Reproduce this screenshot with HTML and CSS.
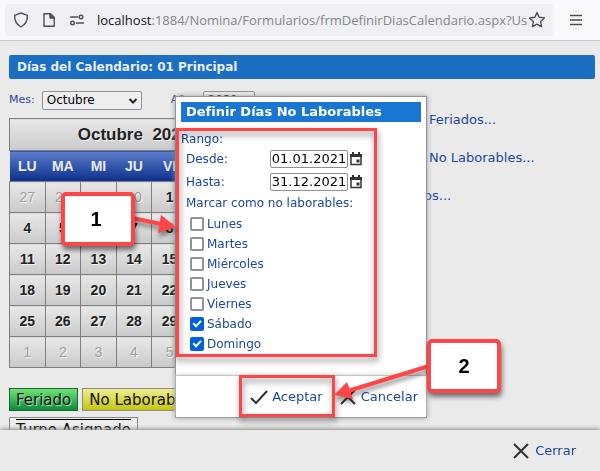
FILE: index.html
```html
<!DOCTYPE html>
<html lang="es">
<head>
<meta charset="utf-8">
<title>Días del Calendario</title>
<link rel="stylesheet" href="styles.css">
</head>
<body>
<div class="browser">
  <div class="urlbar">
    <svg class="ico" width="16" height="16" viewBox="0 0 16 16"><path d="M8 1 14.4 3.3C14.6 8.500 12.500 12.600 8 15 3.500 12.600 1.400 8.500 1.600 3.300Z"/></svg>
    <svg class="ico ico-page" width="16" height="16" viewBox="0 0 16 16"><path d="M3 1.800H9.500L13.200 5.500V14.200H3Z"/><path class="solid" d="M9 1.500 13.500 6H9Z"/></svg>
    <svg class="ico ico-perm" width="16" height="16" viewBox="0 0 16 16"><path d="M1 5H9M7 11H15"/><circle cx="12" cy="5" r="1.800"/><circle cx="3.500" cy="11" r="1.800"/></svg>
    <div class="address"><span class="host">localhost</span>:1884/Nomina/Formularios/frmDefinirDiasCalendario.aspx?Us</div>
    <svg class="ico" width="18" height="18" viewBox="0 0 18 18"><path d="M9 1.600 11.200 6.200 16.400 6.900 12.600 10.500 13.500 15.700 9 13.200 4.500 15.700 5.400 10.500 1.600 6.900 6.800 6.200Z"/></svg>
  </div>
  <button class="menu" aria-label="Menú"><svg class="ico" width="14" height="14" viewBox="0 0 14 14"><path d="M1 2.500H13M1 7H13M1 11.500H13"/></svg></button>
</div>

<main class="page">
  <h1 class="title">Días del Calendario: 01 Principal</h1>
  <div class="filters">
    <label for="mes">Mes:</label>
    <span class="pick"><select id="mes" class="month"><option>Octubre</option></select><svg width="10" height="8" viewBox="0 0 10 8"><path d="M1.500 2 5 5.500 8.500 2"/></svg></span>
    <label for="anio" class="year-label">Año:</label>
    <select id="anio" class="year"><option>2021</option></select>
  </div>
  <div class="columns">
    <div class="left">
      <table class="calendar">
        <thead>
          <tr class="caption"><th colspan="7">Octubre&nbsp; 2021</th></tr>
          <tr class="days"><th>LU</th><th>MA</th><th>MI</th><th>JU</th><th>VI</th><th>SA</th><th>DO</th></tr>
        </thead>
        <tbody>
          <tr><td class="off">27</td><td class="off">28</td><td class="off">29</td><td class="off">30</td><td>1</td><td>2</td><td>3</td></tr>
          <tr><td>4</td><td>5</td><td>6</td><td>7</td><td>8</td><td>9</td><td>10</td></tr>
          <tr><td>11</td><td>12</td><td>13</td><td>14</td><td>15</td><td>16</td><td>17</td></tr>
          <tr><td>18</td><td>19</td><td>20</td><td>21</td><td>22</td><td>23</td><td>24</td></tr>
          <tr><td>25</td><td>26</td><td>27</td><td>28</td><td>29</td><td>30</td><td>31</td></tr>
          <tr><td class="off">1</td><td class="off">2</td><td class="off">3</td><td class="off">4</td><td class="off">5</td><td class="off">6</td><td class="off">7</td></tr>
        </tbody>
      </table>
      <div class="legend">
        <span class="tag holiday">Feriado</span>
        <span class="tag dayoff">No Laborable</span>
        <span class="tag shift"><span>Turno Asignado</span></span>
      </div>
    </div>
    <nav class="links">
      <a href="#">Definir Días Feriados...</a>
      <a href="#">Definir Días No Laborables...</a>
      <a href="#">Definir Turnos...</a>
    </nav>
  </div>
</main>

<footer class="bottom">
  <button class="action"><svg width="18" height="18" viewBox="0 0 18 18"><path d="M2 2 16 16M16 2 2 16"/></svg>Cerrar</button>
</footer>

<div class="overlay">
  <div class="stage">
    <section class="dialog">
      <h2>Definir Días No Laborables</h2>
      <div class="body">
        <div class="range">Rango:</div>
        <div class="field"><label for="desde">Desde:</label><input id="desde" value="01.01.2021"><svg class="cal" width="14" height="14" viewBox="0 0 14 14"><path class="frame" d="M2 3H12V12.500H2Z"/><path class="fill" d="M1 2H13V5H1ZM3 0H5V3H3ZM9 0H11V3H9ZM7.500 7.500H10.500V10.500H7.500Z"/></svg></div>
        <div class="field"><label for="hasta">Hasta:</label><input id="hasta" value="31.12.2021"><svg class="cal" width="14" height="14" viewBox="0 0 14 14"><path class="frame" d="M2 3H12V12.500H2Z"/><path class="fill" d="M1 2H13V5H1ZM3 0H5V3H3ZM9 0H11V3H9ZM7.500 7.500H10.500V10.500H7.500Z"/></svg></div>
        <div class="mark">Marcar como no laborables:</div>
        <div class="checks">
          <label><input type="checkbox">Lunes</label>
          <label><input type="checkbox">Martes</label>
          <label><input type="checkbox">Miércoles</label>
          <label><input type="checkbox">Jueves</label>
          <label><input type="checkbox">Viernes</label>
          <label><input type="checkbox" checked>Sábado</label>
          <label><input type="checkbox" checked>Domingo</label>
        </div>
      </div>
      <div class="actions">
        <button class="action"><svg width="18" height="18" viewBox="0 0 18 18"><path d="M1 10 6 15 17 3"/></svg>Aceptar</button>
        <button class="action"><svg width="18" height="18" viewBox="0 0 18 18"><path d="M2 2 16 16M16 2 2 16"/></svg>Cancelar</button>
      </div>
    </section>
    <div class="frame-mark range-mark"></div>
    <div class="frame-mark accept-mark"></div>
    <svg class="arrows" width="380" height="330" viewBox="0 0 380 330">
      <path class="shaft" d="M77 122 106 128M374 270 293 295"/>
      <path class="head" d="M121 131 103 137 106 119ZM279 299 292 286 298 303Z"/>
    </svg>
    <div class="callout one">1</div>
    <div class="callout two">2</div>
  </div>
</div>
</body>
</html>
```
FILE: styles.css
```css
* { box-sizing: border-box; }
body {
  margin: 0;
  min-height: 100vh;
  background: #eaeaea;
  color: #1c47a0;
  font: 11px/16px "DejaVu Sans", Verdana, sans-serif;
  overflow: hidden;
}
button { border: 0; padding: 0; background: none; color: inherit; font: inherit; }
a { color: inherit; text-decoration: none; }

.browser {
  display: flex;
  align-items: center;
  height: 41px;
  padding: 4px 17px 4px 5px;
  background: #f9f9fb;
  border-bottom: 1px solid #c9c9cc;
}
.urlbar {
  display: flex;
  flex: 1;
  align-items: center;
  gap: 12px;
  min-width: 0;
  height: 32px;
  padding: 0 7px 0 8px;
  border-radius: 4px;
  background: #f0f0f4;
}
.ico { flex: none; fill: none; stroke: #4e4e58; stroke-width: 1.4; stroke-linejoin: round; }
.ico .solid { fill: #4e4e58; }
.address {
  flex: 1;
  min-width: 0;
  margin-right: -12px;
  color: #85858d;
  font: 13px/20px "Open Sans", "Segoe UI", sans-serif;
  white-space: nowrap;
}
.host { color: #15141a; }
.menu { display: flex; margin-left: 16px; }

.page { padding: 14px 5px 0 9px; }
.title {
  margin: 0;
  padding: 4px 8px;
  border-radius: 2px;
  background: #1b6ec2;
  color: #e9eef4;
  font-size: 12px;
  line-height: 16px;
}
.filters { display: flex; align-items: center; height: 20px; margin: 11px 0 8px; }
.pick { position: relative; margin-left: 7px; }
.pick svg { position: absolute; right: 4px; top: 6px; fill: none; stroke: #222; stroke-width: 2; }
select {
  display: block;
  height: 19px;
  padding: 0 4px;
  appearance: none;
  border: 1px solid #8f8f9d;
  border-radius: 2px;
  background: #eeeeee;
  color: #000;
  font: 12px/16px "DejaVu Sans", Verdana, sans-serif;
}
.month { width: 100px; }
.year { width: 52px; margin-left: 7px; }
.year-label { margin-left: 29px; }

.columns { display: flex; }
.left { flex: none; width: 252px; }
.calendar {
  width: 250px;
  table-layout: fixed;
  border-collapse: collapse;
  color: #222;
  font: bold 14px/16px "Liberation Sans", Arial, sans-serif;
  text-align: center;
  text-shadow: 1px 1px 0 #f4f4f4;
}
.calendar th, .calendar td {
  height: 31px;
  padding: 0;
  border: 1px solid #7f7f7f;
  background: linear-gradient(#e8e8e8, #cacaca);
}
.calendar .caption th { height: 32px; font-size: 17px; }
.calendar .days th {
  border-width: 1px 0;
  background: linear-gradient(#5b7dcc, #0b2f8a);
  color: #eaeaea;
  text-shadow: none;
}
.calendar .off { color: #a0a0a0; font-weight: normal; }
.legend { display: flex; flex-wrap: wrap; gap: 6px 4px; margin-top: 20px; }
.tag {
  height: 23px;
  padding: 0 6px;
  border: 1px solid #8a8a8a;
  color: #111;
  font-size: 15px;
  line-height: 22px;
  white-space: nowrap;
}
.holiday { border-color: #176a35; background: linear-gradient(#72e476, #0c8c3a); text-shadow: 1px 1px 1px #b8eebb; }
.dayoff { background: linear-gradient(#eeee91, #c6c60b); }
.shift { padding-top: 1px; background: #ededed; }
.shift span { display: block; border-top: 1px solid #000; line-height: 20px; }
.links { display: flex; flex-direction: column; gap: 22px; margin: -6px 0 0 88px; font-size: 13px; }

.bottom {
  position: fixed;
  inset: auto 0 0;
  display: flex;
  justify-content: flex-end;
  align-items: center;
  height: 41px;
  padding-right: 24px;
  background: #eaeaea;
  box-shadow: 0 -1px 4px #888;
}
.action { display: flex; align-items: center; gap: 5px; font-size: 13px; }
.action svg { fill: none; stroke: #333; stroke-width: 2; }

.overlay { position: absolute; inset: 0; display: flex; justify-content: center; align-items: flex-start; padding-top: 96px; }
.stage { position: relative; left: 1px; width: 252px; }
.dialog {
  padding: 5px 5px 0;
  border: 1px solid #969696;
  background: #fff;
  box-shadow: 0 0 5px #999;
  font-size: 12px;
}
.dialog h2 {
  margin: 0;
  padding: 2px 5px;
  background: #1976d2;
  color: #fff;
  font-size: 13px;
  line-height: 16px;
}
.body { height: 253px; padding-top: 9px; }
.range { height: 16px; }
.field { display: flex; align-items: center; height: 23px; padding-left: 5px; }
.field label { width: 84px; }
.field input {
  width: 78px;
  height: 18px;
  padding: 0;
  border: 1px solid #8f8f9d;
  border-radius: 2px;
  background: #fff;
  color: #000;
  font: 13px/16px "DejaVu Sans", Verdana, sans-serif;
  text-align: center;
}
.cal { margin-left: 1px; }
.cal .frame { fill: none; stroke: #333; stroke-width: 1.500; }
.cal .fill { fill: #333; }
.mark { height: 21px; padding-left: 5px; line-height: 20px; }
.checks { display: grid; grid-auto-rows: 20px; padding-left: 9px; }
.checks label { display: flex; align-items: center; gap: 3px; }
.checks input {
  display: grid;
  width: 14px;
  height: 14px;
  margin: 0;
  appearance: none;
  border: 2px solid #8f8f9d;
  border-radius: 2px;
  background: #fff;
}
.checks input:checked { border-color: #0061e0; background: #0061e0; }
.checks input:checked::before {
  content: "";
  background: #fff;
  clip-path: polygon(5% 50%, 20% 36%, 40% 58%, 82% 12%, 98% 26%, 40% 88%);
}
.actions {
  display: flex;
  justify-content: flex-end;
  align-items: center;
  gap: 16px;
  height: 42px;
  margin: 0 -5px;
  padding-right: 8px;
  border-top: 1px solid #c4c4c4;
  box-shadow: 0 -1px 3px #ddd;
}
.actions .action { gap: 4px; }

.frame-mark { position: absolute; border: 3px solid #ff4545; filter: drop-shadow(1px 4px 3px #0007); }
.range-mark { left: 1px; top: 32px; width: 201px; height: 229px; }
.accept-mark { left: 64px; top: 279px; width: 96px; height: 42px; }
.arrows { position: absolute; left: -120px; top: 0; overflow: visible; filter: drop-shadow(1px 4px 2px #0006); }
.arrows .shaft { stroke: #ff4545; stroke-width: 4; }
.arrows .head { fill: #ff4545; }
.callout {
  position: absolute;
  display: grid;
  place-items: center;
  width: 74px;
  height: 54px;
  border: 4px solid #ff4545;
  border-radius: 5px;
  background: #fff;
  box-shadow: 1px 4px 5px #0008;
  color: #000;
  font: bold 20px/24px "Liberation Sans", Arial, sans-serif;
}
.one { left: -114px; top: 96px; padding-right: 4px; }
.two { left: 252px; top: 243px; }
```
